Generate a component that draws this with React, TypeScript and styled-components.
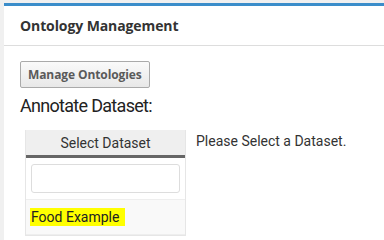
import React from 'react';
import styled, { createGlobalStyle } from 'styled-components';

const Global = createGlobalStyle`
  html, body {
    margin: 0;
    padding: 0;
    background: #f0f0f0;
  }
  body {
    font-family: Roboto, "Liberation Sans", sans-serif;
    color: #333;
  }
`;

const Page = styled.div`
  width: 384px;
  height: 240px;
  overflow: hidden;
  padding: 3px 0 0 4px;
  box-sizing: border-box;
`;

const Panel = styled.section`
  background: #fff;
  border-top: 3px solid #3b8dca;
  min-height: 260px;
`;

const Header = styled.h2`
  margin: 0;
  padding: 0 16px;
  height: 39px;
  display: flex;
  align-items: center;
  font-family: "Open Sans", "Noto Sans", sans-serif;
  font-weight: 700;
  font-size: 14px;
  letter-spacing: -0.1px;
  color: #333;
  border-bottom: 1px solid #ddd;
`;

const Body = styled.div`
  padding: 15px 16px;
`;

const Button = styled.button`
  height: 27px;
  padding: 0 7px;
  font-family: "Open Sans", "Noto Sans", sans-serif;
  font-weight: 700;
  font-size: 12px;
  letter-spacing: -0.1px;
  color: #5a5a5a;
  background: linear-gradient(#fafafa, #e8e8e8);
  border: 1px solid #aaa;
  border-radius: 2px;
`;

const Title = styled.h3`
  margin: 7px 0 14px;
  font-weight: 400;
  font-size: 18px;
  letter-spacing: -0.7px;
  color: #222;
`;

const Row = styled.div`
  display: flex;
  align-items: flex-start;
  gap: 10px;
  padding-left: 5px;
`;

const Table = styled.div`
  width: 161px;
  box-sizing: border-box;
  border: 1px solid #e6e6e6;
  border-top: none;
`;

const TableHead = styled.div`
  height: 25px;
  display: flex;
  align-items: center;
  justify-content: center;
  background: #efefef;
  border-bottom: 3px solid #666;
  font-size: 14px;
  color: #333;
`;

const FilterCell = styled.div`
  padding: 6px 5px 6px;
  border-bottom: 1px solid #eee;
`;

const Filter = styled.input`
  display: block;
  width: 100%;
  height: 29px;
  box-sizing: border-box;
  border: 1px solid #ddd;
  border-radius: 3px;
`;

const Item = styled.div`
  height: 34px;
  display: flex;
  align-items: center;
  padding-left: 4px;
  background: #f9f9f9;
  border-bottom: 1px solid #eee;
`;

const Mark = styled.mark`
  background: #ffff00;
  color: #222;
  font-size: 14px;
  line-height: 18px;
  padding: 0 6px 0 1px;
`;

const Message = styled.p`
  margin: 3px 0 0;
  font-size: 14px;
  color: #333;
`;

export default function App() {
  return (
    <Page>
      <Global />
      <Panel>
        <Header>Ontology Management</Header>
        <Body>
          <Button>Manage Ontologies</Button>
          <Title>Annotate Dataset:</Title>
          <Row>
            <Table>
              <TableHead>Select Dataset</TableHead>
              <FilterCell>
                <Filter />
              </FilterCell>
              <Item>
                <Mark>Food Example</Mark>
              </Item>
            </Table>
            <Message>Please Select a Dataset.</Message>
          </Row>
        </Body>
      </Panel>
    </Page>
  );
}
